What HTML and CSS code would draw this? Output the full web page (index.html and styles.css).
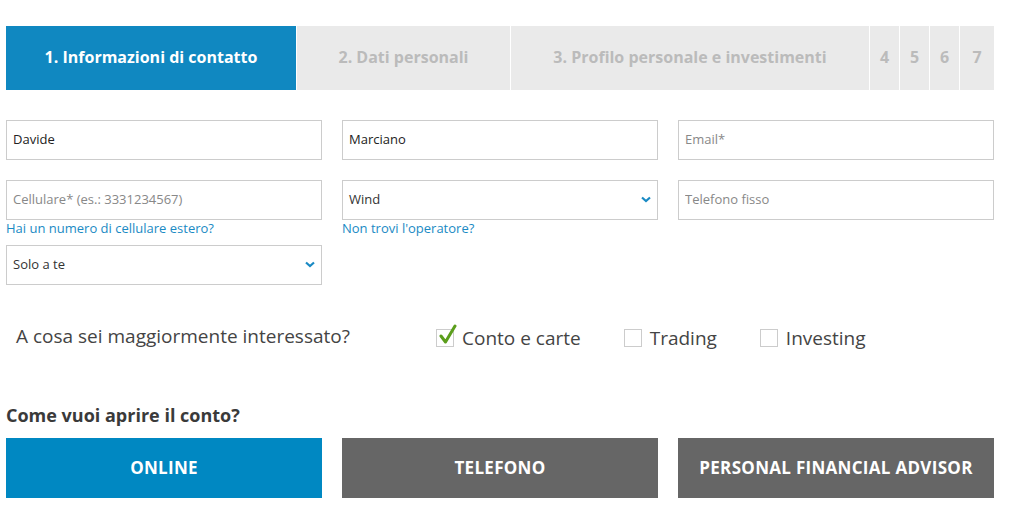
FILE: index.html
```html
<!DOCTYPE html>
<html lang="it">
<head>
    <meta charset="UTF-8">
    <title>Apri il conto</title>
    <link rel="stylesheet" href="styles.css">
</head>
<body>

<div class="page">
    <!-- step bar -->
    <div class="steps">
        <div class="step step-1 active">1. Informazioni di contatto</div>
        <div class="step step-2">2. Dati personali</div>
        <div class="step step-3">3. Profilo personale e investimenti</div>
        <div class="step step-num">4</div>
        <div class="step step-num">5</div>
        <div class="step step-num">6</div>
        <div class="step step-num step-last">7</div>
    </div>

    <form class="contact-form">
        <div class="field">
            <input type="text" value="Davide">
        </div>
        <div class="field">
            <input type="text" value="Marciano">
        </div>
        <div class="field">
            <input type="email" placeholder="Email*">
        </div>

        <div class="field with-hint">
            <input type="text" placeholder="Cellulare* (es.: 3331234567)">
            <a class="hint" href="#">Hai un numero di cellulare estero?</a>
        </div>
        <div class="field with-hint">
            <div class="select-box">
                <span>Wind</span>
                <svg class="chevron" width="10" height="7" viewBox="0 0 10 7"><polyline points="1,1.5 5,5 9,1.5" fill="none" stroke="#1a8ac4" stroke-width="2.2"/></svg>
            </div>
            <a class="hint" href="#">Non trovi l'operatore?</a>
        </div>
        <div class="field">
            <input type="text" placeholder="Telefono fisso">
        </div>

        <div class="field">
            <div class="select-box">
                <span>Solo a te</span>
                <svg class="chevron" width="10" height="7" viewBox="0 0 10 7"><polyline points="1,1.5 5,5 9,1.5" fill="none" stroke="#1a8ac4" stroke-width="2.2"/></svg>
            </div>
        </div>
    </form>

    <div class="interest-row">
        <div class="interest-question">A cosa sei maggiormente interessato?</div>
        <label class="option">
            <span class="box checked">
                <svg class="tick" width="20" height="22" viewBox="0 0 20 22"><path d="M3 12 L7.5 18 L17 2" fill="none" stroke="#5b9e1c" stroke-width="3" stroke-linecap="round" stroke-linejoin="round"/></svg>
            </span>
            Conto e carte
        </label>
        <label class="option">
            <span class="box"></span>
            Trading
        </label>
        <label class="option">
            <span class="box"></span>
            Investing
        </label>
    </div>

    <h3 class="open-title">Come vuoi aprire il conto?</h3>

    <div class="open-options">
        <button class="open-btn online">ONLINE</button>
        <button class="open-btn">TELEFONO</button>
        <button class="open-btn">PERSONAL FINANCIAL ADVISOR</button>
    </div>
</div>

</body>
</html>
```

FILE: styles.css
```css
/* form page for "apri il conto" */
body {
    margin: 0;
    background-color: #fff;
    font-family: 'Open Sans', 'Liberation Sans', sans-serif;
    color: #333;
}

.page {
    width: 988px;
    margin-left: 6px;
    padding-top: 26px;
}

/* steps bar */
.steps {
    display: flex;
    gap: 1px;
    height: 64px;
}

.step {
    display: flex;
    align-items: center;
    justify-content: center;
    padding-bottom: 3px;
    box-sizing: border-box;
    background-color: #eaeaea;
    color: #bbb;
    font-weight: bold;
    font-size: 16px;
}

.step.active {
    background-color: #1088c1;
    color: #fff;
}

.step-1 { width: 290px; }
.step-2 { width: 213px; }
.step-3 { width: 358px; }
.step-num { width: 29px; }
.step-last { width: 34px; }

/* contact fields */
.contact-form {
    display: grid;
    grid-template-columns: repeat(3, 316px);
    column-gap: 20px;
    margin-top: 30px;
}

.field {
    margin-bottom: 20px;
}

.field.with-hint {
    margin-bottom: 8px;
}

input[type="text"],
input[type="email"],
.select-box {
    box-sizing: border-box;
    width: 100%;
    height: 40px;
    padding: 0 6px 2px;
    border: 1px solid #ccc;
    border-radius: 0;
    font-family: 'Open Sans', 'Liberation Sans', sans-serif;
    font-size: 13px;
    color: #222;
    background-color: #fff;
    outline: none;
}

input::placeholder {
    color: #888;
}

.select-box {
    display: flex;
    align-items: center;
    justify-content: space-between;
    padding-right: 6px;
    color: #333;
}

.chevron {
    display: block;
}

.hint {
    display: block;
    margin-top: 0;
    line-height: 17px;
    font-size: 13px;
    color: #1a8ac4;
    text-decoration: none;
}

/* interest checkboxes */
.interest-row {
    display: flex;
    align-items: center;
    height: 30px;
    margin-top: 18px;
}

.interest-question {
    box-sizing: border-box;
    width: 430px;
    padding-left: 10px;
    padding-bottom: 4px;
    font-size: 19px;
    color: #444;
}

.option {
    display: flex;
    align-items: center;
    gap: 8px;
    margin-right: 43px;
    font-size: 19px;
    color: #444;
}

.box {
    position: relative;
    width: 16px;
    height: 16px;
    border: 1px solid #ccc;
}

.tick {
    position: absolute;
    left: 1px;
    top: -6px;
}

/* how to open */
.open-title {
    margin: 51px 0 0;
    font-size: 18px;
    font-weight: bold;
    color: #3a3a3a;
    line-height: 22px;
}

.open-options {
    display: grid;
    grid-template-columns: repeat(3, 316px);
    column-gap: 20px;
    margin-top: 12px;
}

.open-btn {
    height: 60px;
    padding-bottom: 2px;
    border: none;
    background-color: #666;
    color: #fff;
    font-family: 'Open Sans', 'Liberation Sans', sans-serif;
    font-weight: bold;
    font-size: 17px;
    letter-spacing: 0.3px;
    cursor: pointer;
}

.open-btn.online {
    background-color: #0088c2;
}
```
